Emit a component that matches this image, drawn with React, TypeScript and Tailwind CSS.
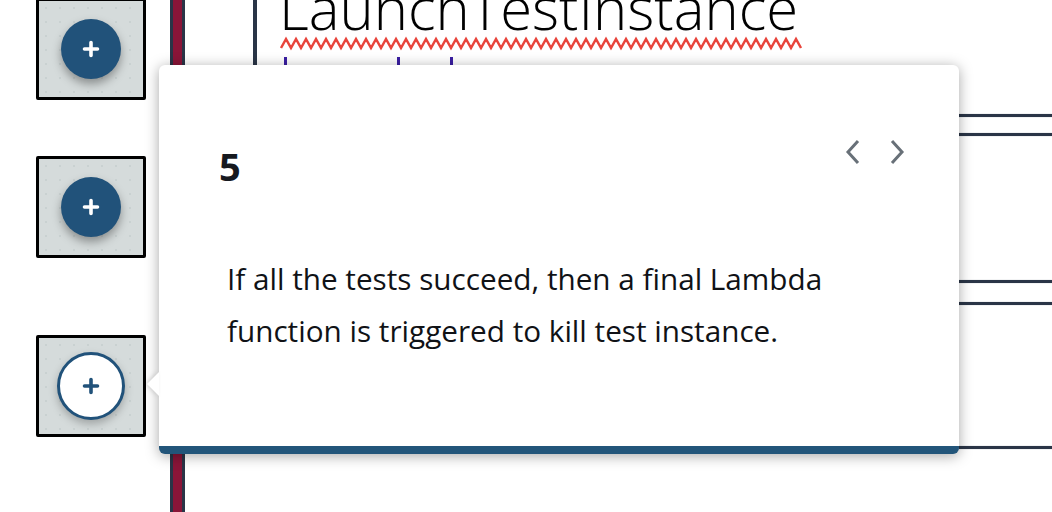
import React from "react";

function Plus({ color }: { color: string }) {
  return (
    <svg width="18" height="18" viewBox="0 0 18 18">
      <path d="M9 2.5v13M2.5 9h13" stroke={color} strokeWidth="3.6" strokeLinecap="round" />
    </svg>
  );
}

function Node({ top, outlined }: { top: number; outlined?: boolean }) {
  return (
    <div
      className="absolute left-[36px] w-[110px] h-[102px] border-[3px] border-black rounded-[2px] bg-[#d5dbdb] flex items-center justify-center"
      style={{ top }}
    >
      <div className="absolute inset-0 bg-[radial-gradient(#c4cccc_1px,transparent_1px)] bg-[length:14px_14px] opacity-70" />
      {outlined ? (
        <div className="relative w-[68px] h-[68px] rounded-full bg-white border-[3px] border-[#21527a] flex items-center justify-center shadow-[0_4px_8px_rgba(0,0,0,0.25)]">
          <Plus color="#21527a" />
        </div>
      ) : (
        <div className="relative w-[60px] h-[60px] rounded-full bg-[#21527a] flex items-center justify-center shadow-[0_5px_10px_rgba(0,0,0,0.35)]">
          <Plus color="#ffffff" />
        </div>
      )}
    </div>
  );
}

function HLine({ top }: { top: number }) {
  return (
    <div
      className="absolute left-[940px] right-0 h-[3px] bg-[#2a3547] shadow-[0_0_1px_rgba(42,53,71,0.6)]"
      style={{ top }}
    />
  );
}

export default function App() {
  const zig: string[] = [];
  for (let i = 0; i <= 104; i++) {
    zig.push(`${281 + i * 5},${i % 2 === 0 ? 48 : 39}`);
  }
  return (
    <div className="relative w-[1052px] h-[512px] bg-white overflow-hidden font-['Open_Sans',sans-serif]">
      {/* Diagram canvas */}
      <div className="absolute left-[170px] top-0 w-[15px] h-[512px] bg-[#8a1538] border-x-[3px] border-[#2a3547]" />
      <div className="absolute left-[253px] top-0 w-[4px] h-[80px] bg-[#2a3547]" />
      <div className="absolute left-[279px] top-[-21px] text-[58px] font-light leading-none text-black whitespace-nowrap">
        LaunchTestInstance
      </div>
      <svg className="absolute left-0 top-0" width="1052" height="80">
        <polyline points={zig.join(" ")} fill="none" stroke="#e8453c" strokeWidth="2.5" />
        <rect x="284" y="57" width="3" height="14" fill="#3b1fa3" />
        <rect x="397" y="57" width="3" height="14" fill="#3b1fa3" />
        <rect x="450" y="57" width="3" height="14" fill="#3b1fa3" />
      </svg>
      <HLine top={114} />
      <HLine top={133} />
      <HLine top={280} />
      <HLine top={302} />
      <HLine top={446} />

      <Node top={-2} />
      <Node top={156} />
      <Node top={335} outlined />

      {/* Popover */}
      <div className="absolute left-[159px] top-[65px] w-[800px] h-[389px] bg-white rounded-[6px] border-b-[8px] border-[#22557a] shadow-[0_2px_14px_rgba(0,0,0,0.35)]">
        <div className="absolute left-[-12px] top-[307px] w-0 h-0 border-y-[12px] border-y-transparent border-r-[12px] border-r-white drop-shadow-[-2px_0_2px_rgba(0,0,0,0.15)]" />
        <div className="flex items-start justify-between pl-[60px] pr-[54px] pt-[82px]">
          <div className="text-[38px] font-bold leading-none text-[#16191f]">5</div>
          <div className="flex items-center gap-[28px] mt-[-8px]">
            <svg width="16" height="26" viewBox="0 0 16 26">
              <path d="M13 2L3 13l10 11" stroke="#687078" strokeWidth="3" fill="none" />
            </svg>
            <svg width="16" height="26" viewBox="0 0 16 26">
              <path d="M3 2l10 11L3 24" stroke="#687078" strokeWidth="3" fill="none" />
            </svg>
          </div>
        </div>
        <div className="pl-[68px] pt-[68px] text-[29.7px] leading-[52px] text-[#101216]">
          <p>If all the tests succeed, then a final Lambda</p>
          <p>function is triggered to kill test instance.</p>
        </div>
      </div>
    </div>
  );
}
